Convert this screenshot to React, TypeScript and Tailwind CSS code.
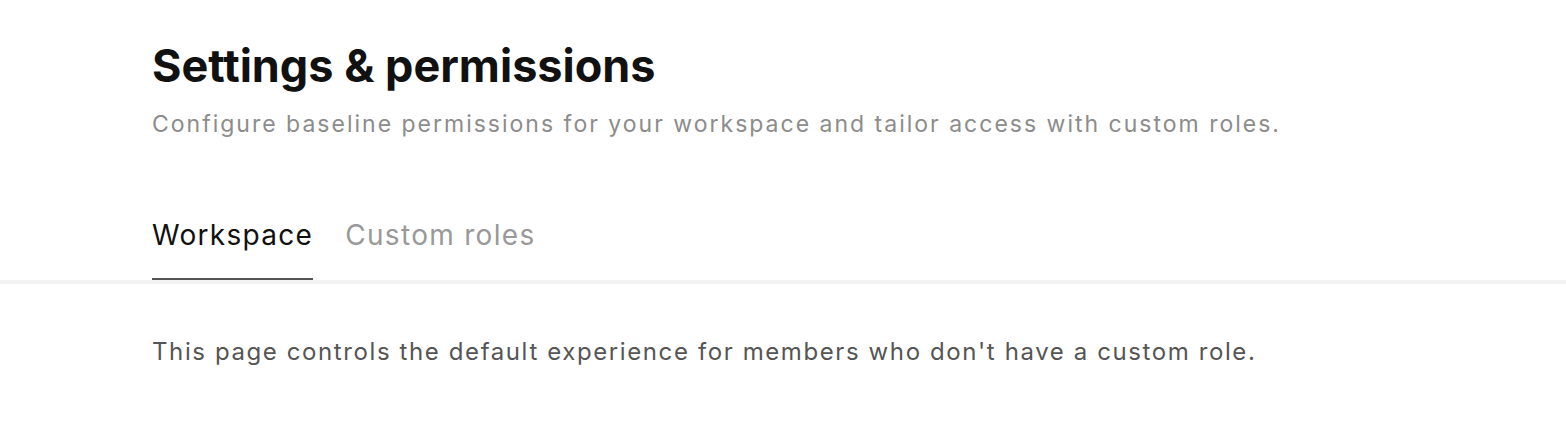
import React from "react";

export default function App() {
  return (
    <div className="min-h-[422px] bg-white font-['Inter',sans-serif]">
      <header className="px-[152px] pt-[38px]">
        <h1 className="text-[45px] font-bold leading-[56px] text-[#111111]">
          Settings &amp; permissions
        </h1>
        <p className="mt-[15px] text-[23px] leading-[30px] tracking-[2px] text-[#8c8c8c]">
          Configure baseline permissions for your workspace and tailor access with custom roles.
        </p>
      </header>

      <nav className="mt-[79px] border-b-[4px] border-[#f2f2f2]">
        <div className="flex gap-[32px] px-[152px]">
          <button className="border-b-[2px] border-[#555555] pb-[26px] text-[28px] leading-[34px] tracking-[1.3px] text-[#111111]">
            Workspace
          </button>
          <button className="border-b-[2px] border-transparent pb-[26px] text-[28px] leading-[34px] tracking-[1.3px] text-[#999999]">
            Custom roles
          </button>
        </div>
      </nav>

      <section className="px-[152px] pt-[53px]">
        <p className="text-[24px] leading-[30px] tracking-[1.6px] text-[#555555]">
          This page controls the default experience for members who don't have a custom role.
        </p>
      </section>
    </div>
  );
}
